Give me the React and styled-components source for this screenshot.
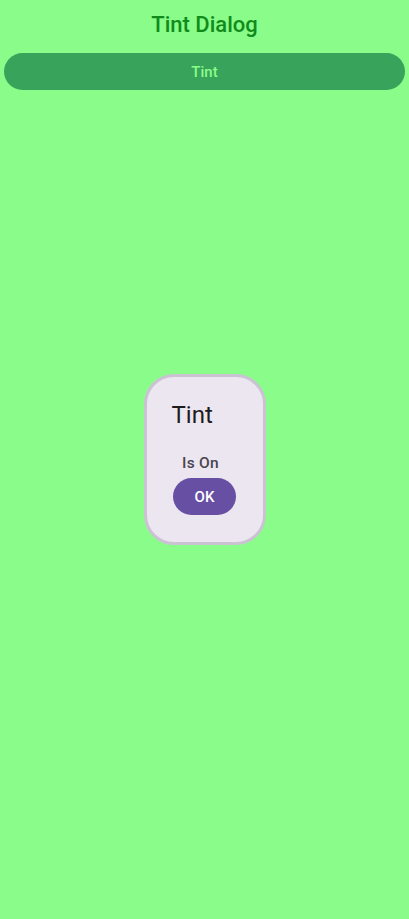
import React from "react";
import styled, { createGlobalStyle } from "styled-components";

const GlobalStyle = createGlobalStyle`
  html, body {
    margin: 0;
    padding: 0;
    background: #89fc89;
  }
  body {
    font-family: Roboto, "Noto Sans", sans-serif;
  }
`;

const Screen = styled.div`
  width: 409px;
  height: 919px;
  background: #89fc89;
  display: flex;
  flex-direction: column;
  align-items: stretch;
  box-sizing: border-box;
  padding: 0 4px;
`;

const Title = styled.h1`
  margin: 0;
  height: 50px;
  display: flex;
  align-items: center;
  justify-content: center;
  font-size: 22px;
  font-weight: 500;
  color: #118b1c;
  padding-bottom: 2px;
  box-sizing: border-box;
`;

const TintButton = styled.button`
  margin-top: 3px;
  height: 37px;
  border: none;
  border-radius: 999px;
  background: #38a35a;
  color: #8afc8a;
  font-family: inherit;
  font-size: 15px;
  font-weight: 500;
  letter-spacing: 0.1px;
`;

/* dialog is centred on the whole screen, so balance the header height */
const Stage = styled.div`
  flex: 1;
  display: flex;
  align-items: center;
  justify-content: center;
  padding-bottom: 90px;
`;

const Dialog = styled.div`
  width: 122px;
  height: 171px;
  box-sizing: border-box;
  border: 3px solid #cbc3d3;
  border-radius: 30px;
  background: #ece6f0;
  display: flex;
  flex-direction: column;
  padding: 22px 0 0 25px;
`;

const DialogTitle = styled.div`
  font-size: 24px;
  font-weight: 400;
  color: #1d1b20;
  line-height: 32px;
`;

const DialogBody = styled.div`
  margin-top: 22px;
  width: 66px;
  display: flex;
  flex-direction: column;
  align-items: center;
`;

const Message = styled.div`
  font-size: 15.5px;
  font-weight: 500;
  color: #49454f;
  line-height: 20px;
  letter-spacing: 0.3px;
  margin-right: 8px;
`;

const OkButton = styled.button`
  margin-top: 5px;
  width: 63px;
  height: 37px;
  border: none;
  border-radius: 999px;
  background: #6750a4;
  color: #ffffff;
  font-family: inherit;
  font-size: 15px;
  font-weight: 500;
`;

export default function App() {
  return (
    <>
      <GlobalStyle />
      <Screen>
        <Title>Tint Dialog</Title>
        <TintButton>Tint</TintButton>
        <Stage>
          <Dialog>
            <DialogTitle>Tint</DialogTitle>
            <DialogBody>
              <Message>Is On</Message>
              <OkButton>OK</OkButton>
            </DialogBody>
          </Dialog>
        </Stage>
      </Screen>
    </>
  );
}
